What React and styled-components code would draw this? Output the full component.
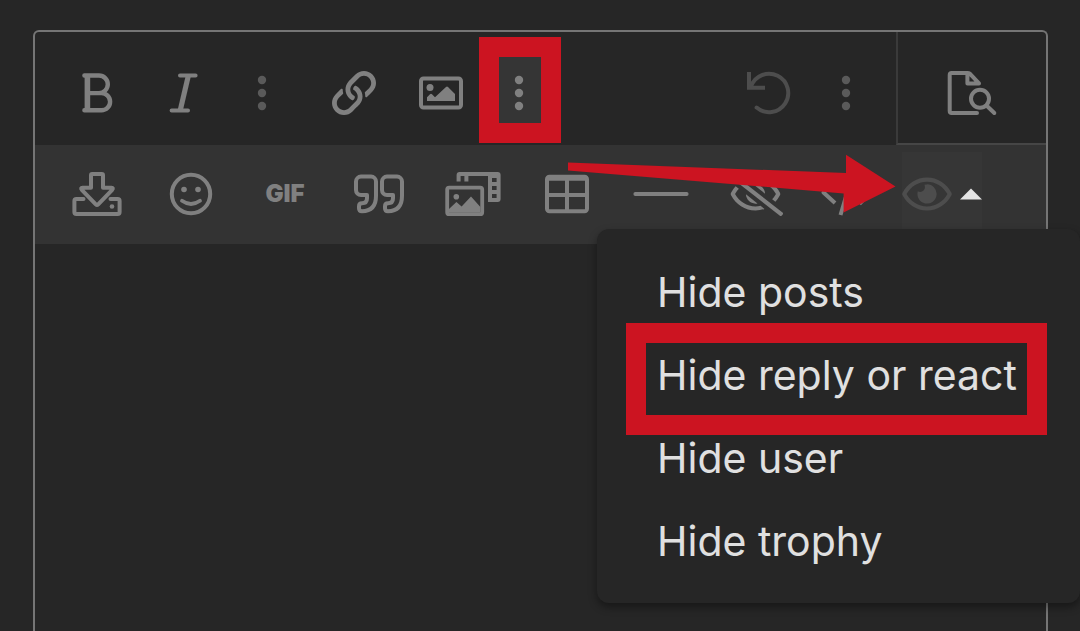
import React from "react";
import styled, { createGlobalStyle } from "styled-components";

const red = "#cc1421";

const GlobalStyle = createGlobalStyle`
  *, *::before, *::after { box-sizing: border-box; }
  body {
    margin: 0;
    background: #262626;
    color: #e0e0e0;
    font-family: Inter, "Liberation Sans", sans-serif;
  }
`;

const Page = styled.main`
  display: flex;
  flex-direction: column;
  min-height: 100vh;
  padding: 30px 32px 0 33px;
  overflow: hidden;
`;

const Editor = styled.section`
  flex: 1;
  display: flex;
  flex-direction: column;
  border: 2px solid #757575;
  border-bottom: 0;
  border-radius: 6px 6px 0 0;
`;

const TopBar = styled.div`
  display: flex;
`;

const MainTools = styled.div`
  flex: 1;
  display: flex;
  gap: 19px;
  padding: 22px 18px 13px 21px;
`;

const ToolGroup = styled.div`
  display: flex;
  gap: 5px;
  margin-left: ${(p) => (p.$end ? "auto" : "0")};
`;

const ExtraBar = styled.div`
  position: relative;
  display: flex;
  gap: 12px;
  padding: 7px 21px 8px;
  background: #333333;
`;

const ToolButton = styled.button`
  position: relative;
  flex: none;
  display: flex;
  align-items: center;
  justify-content: center;
  width: ${(p) => (p.$narrow ? 64 : 82)}px;
  height: ${(p) => (p.$tall ? 84 : 78)}px;
  padding: 0;
  border: 0;
  border-radius: 4px;
  background: ${(p) => (p.$active ? "#353535" : "transparent")};
  color: ${(p) => (p.$dim ? "#4d4d4d" : p.$soft ? "#5a5a5a" : "#808080")};
  font: 900 24px/24px Inter, "Liberation Sans", sans-serif;
  cursor: pointer;
`;

const PreviewButton = styled.button`
  flex: none;
  display: flex;
  align-items: center;
  justify-content: center;
  width: 150px;
  padding: 10px 2px 0 0;
  border: solid #3a3a3a;
  border-width: 0 0 2px 2px;
  border-bottom-color: #464646;
  background: transparent;
  color: #808080;
  cursor: pointer;
`;

const Dropdown = styled.div`
  position: relative;
`;

const DropdownToggle = styled.button`
  display: flex;
  align-items: center;
  gap: 8px;
  width: 80px;
  height: 84px;
  padding: 0;
  border: 0;
  background: #363636;
  color: #4d4d4d;
  cursor: pointer;
`;

const Menu = styled.ul`
  position: absolute;
  z-index: 3;
  top: 77px;
  left: -305px;
  width: 483px;
  margin: 0;
  padding: 21px 0;
  list-style: none;
  background: #262626;
  border-radius: 12px;
  box-shadow: 0 4px 8px rgba(0, 0, 0, 0.4);
`;

const MenuItem = styled.li`
  position: relative;
`;

const MenuAction = styled.button`
  display: block;
  width: 100%;
  height: 83px;
  padding: 0 0 0 60px;
  border: 0;
  background: transparent;
  color: #e0e0e0;
  font: 400 41px/50px Inter, "Liberation Sans", sans-serif;
  text-align: left;
  white-space: nowrap;
  cursor: pointer;
`;

const Highlight = styled.span`
  position: absolute;
  z-index: 2;
  inset: ${(p) => p.$inset};
  border: 20px solid ${red};
  pointer-events: none;
`;

const Arrow = styled.svg`
  position: absolute;
  z-index: 2;
  top: 9px;
  left: 533px;
  width: 328px;
  height: 60px;
  fill: ${red};
  pointer-events: none;
`;

const Message = styled.textarea`
  flex: 1;
  display: block;
  width: 100%;
  min-height: 380px;
  padding: 24px;
  border: 0;
  outline: 0;
  resize: none;
  background: transparent;
  color: #e0e0e0;
  font: 400 41px/50px Inter, "Liberation Sans", sans-serif;
`;

const Glyph = styled.svg`
  flex: none;
  display: block;
  width: 60px;
  height: 60px;
  fill: none;
  stroke: currentColor;
  stroke-width: 4;
  stroke-linecap: round;
  stroke-linejoin: round;

  .solid {
    fill: currentColor;
    stroke: none;
  }
`;

const SolidGlyph = styled.svg`
  flex: none;
  display: block;
  width: ${(p) => p.$w}px;
  height: 44px;
  fill: currentColor;
`;

const Caret = styled.svg`
  flex: none;
  width: 22px;
  height: 12px;
  fill: #e4e4e4;
`;

const Icon = ({ children }) => (
  <Glyph viewBox="-30 -30 60 60" aria-hidden="true">{children}</Glyph>
);

const BoldIcon = () => (
  <Icon>
    <path strokeWidth="4.4" d="M-12.6-17.5H2a8.8 8.8 0 0 1 0 17.6H-9.7M2 .1h2.5a8.6 8.6 0 0 1 0 17.2H-12.6" />
    <path strokeWidth="5.6" strokeLinecap="butt" d="M-9.6-17.5V17.3" />
  </Icon>
);

const ItalicIcon = () => (
  <Icon>
    <path d="M-4-17.6H11.6M-12.4 17.4H4" />
    <path strokeWidth="5.2" strokeLinecap="butt" d="M4.4-17.5L-3.8 17.5" />
  </Icon>
);

const DotsIcon = () => (
  <Icon>
    <g className="solid">
      <circle cy="-13" r="4.2" />
      <circle r="4.2" />
      <circle cy="13" r="4.2" />
    </g>
  </Icon>
);

const LinkIcon = () => (
  <SolidGlyph $w={44} viewBox="0 0 512 512" aria-hidden="true">
    <path d="M314.222 197.78c51.091 51.091 54.377 132.287 9.75 187.16-6.242 7.73-2.784 3.865-84.94 86.02-54.696 54.696-143.266 54.745-197.99 0-54.711-54.69-54.734-143.255 0-197.99 32.773-32.773 51.835-51.899 63.409-63.457 7.463-7.452 20.331-2.354 20.486 8.192a173.31 173.31 0 0 0 4.746 37.828c.966 4.029-.272 8.269-3.202 11.198L80.632 312.57c-32.755 32.775-32.887 85.892 0 118.8 32.775 32.755 85.892 32.887 118.8 0l75.19-75.2c32.718-32.725 32.777-86.013 0-118.79a83.722 83.722 0 0 0-22.814-16.229c-4.623-2.233-7.182-7.25-6.561-12.346 1.356-11.122 6.296-21.885 14.815-30.405l4.375-4.375c3.625-3.626 9.177-4.594 13.76-2.294 12.999 6.524 25.187 15.211 36.025 26.049zM470.958 41.04c-54.724-54.745-143.294-54.696-197.99 0-82.156 82.156-78.698 78.29-84.94 86.02-44.627 54.873-41.341 136.069 9.75 187.16 10.838 10.838 23.026 19.525 36.025 26.049 4.582 2.3 10.134 1.331 13.76-2.294l4.375-4.375c8.52-8.519 13.459-19.283 14.815-30.405.621-5.096-1.938-10.113-6.561-12.346a83.706 83.706 0 0 1-22.814-16.229c-32.777-32.777-32.718-86.065 0-118.79l75.19-75.2c32.908-32.887 86.025-32.755 118.8 0 32.887 32.908 32.755 86.025 0 118.8l-45.848 45.84c-2.93 2.929-4.168 7.169-3.202 11.198a173.31 173.31 0 0 1 4.746 37.828c.155 10.546 13.023 15.644 20.486 8.192 11.574-11.558 30.636-30.684 63.409-63.457 54.733-54.735 54.71-143.3-.001-197.991z" />
  </SolidGlyph>
);

const ImageIcon = () => (
  <Icon>
    <rect x="-20" y="-14.6" width="40" height="29.2" rx="2.5" />
    <g className="solid">
      <circle cx="-11" cy="-5.5" r="3.5" />
      <path d="M-14 8V4.2l3-3q1-1 2 0L-6 4.2 5-6q1-1 2 0l7 7V8z" />
    </g>
  </Icon>
);

const UndoIcon = () => (
  <Icon>
    <path strokeLinecap="butt" strokeLinejoin="miter" d="M-19-21V-5.2H-3" />
    <path d="M-11.4 14.6A19.2 19.2 0 1 0-17-6.6" />
  </Icon>
);

const PreviewIcon = () => (
  <Icon>
    <path d="M6 20H-19.3a2 2 0 0 1-2-2V-18a2 2 0 0 1 2-2H-3.6V-9.6H8L-1.2-19.4Q-2-20-3.6-20" />
    <circle cx="9" cy="5.7" r="9" />
    <path d="M16 13L23.3 20" />
  </Icon>
);

const DownloadIcon = () => (
  <Icon>
    <path d="M-13.5 5H-20.6a2 2 0 0 0-2 2V18a2 2 0 0 0 2 2H20.6a2 2 0 0 0 2-2V7a2 2 0 0 0-2-2H13.5" />
    <path d="M-4.8-20H4.8a1.2 1.2 0 0 1 1.2 1.2V-6.2H14.4q2.4 0 .8 2L1.2 10.4q-1.2 1.2-2.4 0L-15.2-4.2q-1.6-2 .8-2H-6V-18.8A1.2 1.2 0 0 1-4.8-20z" />
    <circle className="solid" cx="15" cy="12.5" r="2.3" />
  </Icon>
);

const SmileIcon = () => (
  <Icon>
    <circle r="19.2" />
    <path strokeWidth="3.8" d="M-9 6.8Q0 13.2 9 6.8" />
    <g className="solid">
      <circle cx="-7" cy="-4.5" r="2.8" />
      <circle cx="7" cy="-4.5" r="2.8" />
    </g>
  </Icon>
);

const quoteMark =
  "M-3-12.4V2q0 15-14 15.3-3 0-3-3v-2q0-3 3-3 5 0 5-5V1h-6a5 5 0 0 1-5-5v-8.4a5 5 0 0 1 5-5h10a5 5 0 0 1 5 5z";

const QuoteIcon = () => (
  <Icon>
    <path d={quoteMark} />
    <path d={quoteMark} transform="translate(26 0)" />
  </Icon>
);

const MediaIcon = () => (
  <Icon>
    <rect x="-25.8" y="-6.4" width="35" height="26.6" rx="2" strokeWidth="3.8" />
    <g className="solid">
      <circle cx="-16.7" cy="2.7" r="2.8" />
      <path d="M-24 18.6V15L-16.6 8-11.4 12.6-2 2.6 7.4 13V18.6z" />
      <path
        fillRule="evenodd"
        d="M-16.4-12.4V-19a3 3 0 0 1 3-3H24.6a3 3 0 0 1 3 3V5a3 3 0 0 1-3 3H15V-18H-4.6V-12.4H-8.6V-18H-12.4V-12.4zM19-16V-12H23.6V-16zM19-8V-4H23.6V-8zM19 0V4H23.6V0z"
      />
    </g>
  </Icon>
);

const TableIcon = () => (
  <Icon>
    <rect x="-20" y="-17.2" width="40" height="34.4" rx="2.5" />
    <path strokeLinecap="butt" d="M-20-15.2H20M-20 1H20M0-16V17" />
  </Icon>
);

const RuleIcon = () => (
  <Icon>
    <path d="M-25.6 0H25.6" />
  </Icon>
);

const HiddenIcon = () => (
  <SolidGlyph $w={55} viewBox="0 0 640 512" aria-hidden="true">
    <path d="M634 471L36 3.51A16 16 0 0 0 13.51 6l-10 12.49A16 16 0 0 0 6 41l598 467.49a16 16 0 0 0 22.49-2.49l10-12.49A16 16 0 0 0 634 471zM296.79 146.47l134.79 105.38C429.36 191.91 380.48 144 320 144a112.26 112.26 0 0 0-23.21 2.47zm46.42 219.07L208.42 260.16C210.65 320.09 259.53 368 320 368a113 113 0 0 0 23.21-2.46zM320 112c98.65 0 189.09 55 237.93 144a285.53 285.53 0 0 1-44 60.2l37.74 29.5a333.7 333.7 0 0 0 52.9-75.11 32.35 32.35 0 0 0 0-29.19C550.29 135.59 442.93 64 320 64c-36.7 0-71.71 7-104.63 18.81l46.41 36.29c18.94-4.3 38.34-7.1 58.22-7.1zm0 288c-98.65 0-189.08-55-237.93-144a285.47 285.47 0 0 1 44.05-60.19l-37.74-29.5a333.6 333.6 0 0 0-52.89 75.1 32.35 32.35 0 0 0 0 29.19C89.72 376.41 197.08 448 320 448c36.7 0 71.71-7.05 104.63-18.81l-46.41-36.28C359.28 397.2 339.89 400 320 400z" />
  </SolidGlyph>
);

const CodeIcon = () => (
  <Icon>
    <path strokeLinecap="butt" d="M-15-13L-25.5-1.5-14 9M9-13L21.5-2 10.5 10M4-21L-8.5 21" />
  </Icon>
);

const EyeIcon = () => (
  <SolidGlyph $w={50} viewBox="0 0 576 512" aria-hidden="true">
    <path d="M288 144a110.94 110.94 0 0 0-31.24 5 55.4 55.4 0 0 1 7.24 27 56 56 0 0 1-56 56 55.4 55.4 0 0 1-27-7.24A111.71 111.71 0 1 0 288 144zm284.52 97.4C518.29 135.59 410.93 64 288 64S57.68 135.64 3.48 241.41a32.35 32.35 0 0 0 0 29.19C57.71 376.41 165.07 448 288 448s230.32-71.64 284.52-177.4a32.35 32.35 0 0 0 0-29.19zM288 400c-98.65 0-189.09-55-237.93-144C98.91 167 189.34 112 288 112s189.09 55 237.93 144C477.1 345 386.66 400 288 400z" />
  </SolidGlyph>
);

const extraTools = [
  ["Attach files", <DownloadIcon />],
  ["Smilies", <SmileIcon />],
  ["Insert GIF", "GIF"],
  ["Quote", <QuoteIcon />],
  ["Media", <MediaIcon />],
  ["Insert table", <TableIcon />],
  ["Insert horizontal line", <RuleIcon />],
  ["Spoiler", <HiddenIcon />],
  ["Code", <CodeIcon />],
];

const hideActions = ["Hide posts", "Hide reply or react", "Hide user", "Hide trophy"];

export default function App() {
  return (
    <Page>
      <GlobalStyle />
      <Editor>
        <TopBar>
          <MainTools>
            <ToolGroup>
              <ToolButton aria-label="Bold"><BoldIcon /></ToolButton>
              <ToolButton aria-label="Italic"><ItalicIcon /></ToolButton>
              <ToolButton $narrow $soft aria-label="More text options"><DotsIcon /></ToolButton>
            </ToolGroup>
            <ToolGroup>
              <ToolButton aria-label="Insert link"><LinkIcon /></ToolButton>
              <ToolButton aria-label="Insert image"><ImageIcon /></ToolButton>
              <ToolButton $narrow $active aria-label="More insert options">
                <DotsIcon />
                <Highlight $inset="-17px -10px -11px -8px" />
              </ToolButton>
            </ToolGroup>
            <ToolGroup $end>
              <ToolButton $dim aria-label="Undo"><UndoIcon /></ToolButton>
              <ToolButton $narrow $soft aria-label="More options"><DotsIcon /></ToolButton>
            </ToolGroup>
          </MainTools>
          <PreviewButton aria-label="Preview"><PreviewIcon /></PreviewButton>
        </TopBar>
        <ExtraBar>
          {extraTools.map(([label, icon]) => (
            <ToolButton key={label} $tall aria-label={label}>{icon}</ToolButton>
          ))}
          <Dropdown>
            <DropdownToggle aria-label="Hide" aria-expanded="true">
              <EyeIcon />
              <Caret viewBox="0 0 22 12" aria-hidden="true"><path d="M0 11.5L11 .5 22 11.5z" /></Caret>
            </DropdownToggle>
            <Menu>
              {hideActions.map((label) => (
                <MenuItem key={label}>
                  <MenuAction>{label}</MenuAction>
                  {label === "Hide reply or react" && <Highlight $inset="-10px 33px -19px 29px" />}
                </MenuItem>
              ))}
            </Menu>
          </Dropdown>
          <Arrow viewBox="0 0 328 60" aria-hidden="true">
            <path d="M0 8.5L278 19V.8L327.5 32.6 275.6 58.4V39.4L0 16.5z" />
          </Arrow>
        </ExtraBar>
        <Message aria-label="Message" />
      </Editor>
    </Page>
  );
}
